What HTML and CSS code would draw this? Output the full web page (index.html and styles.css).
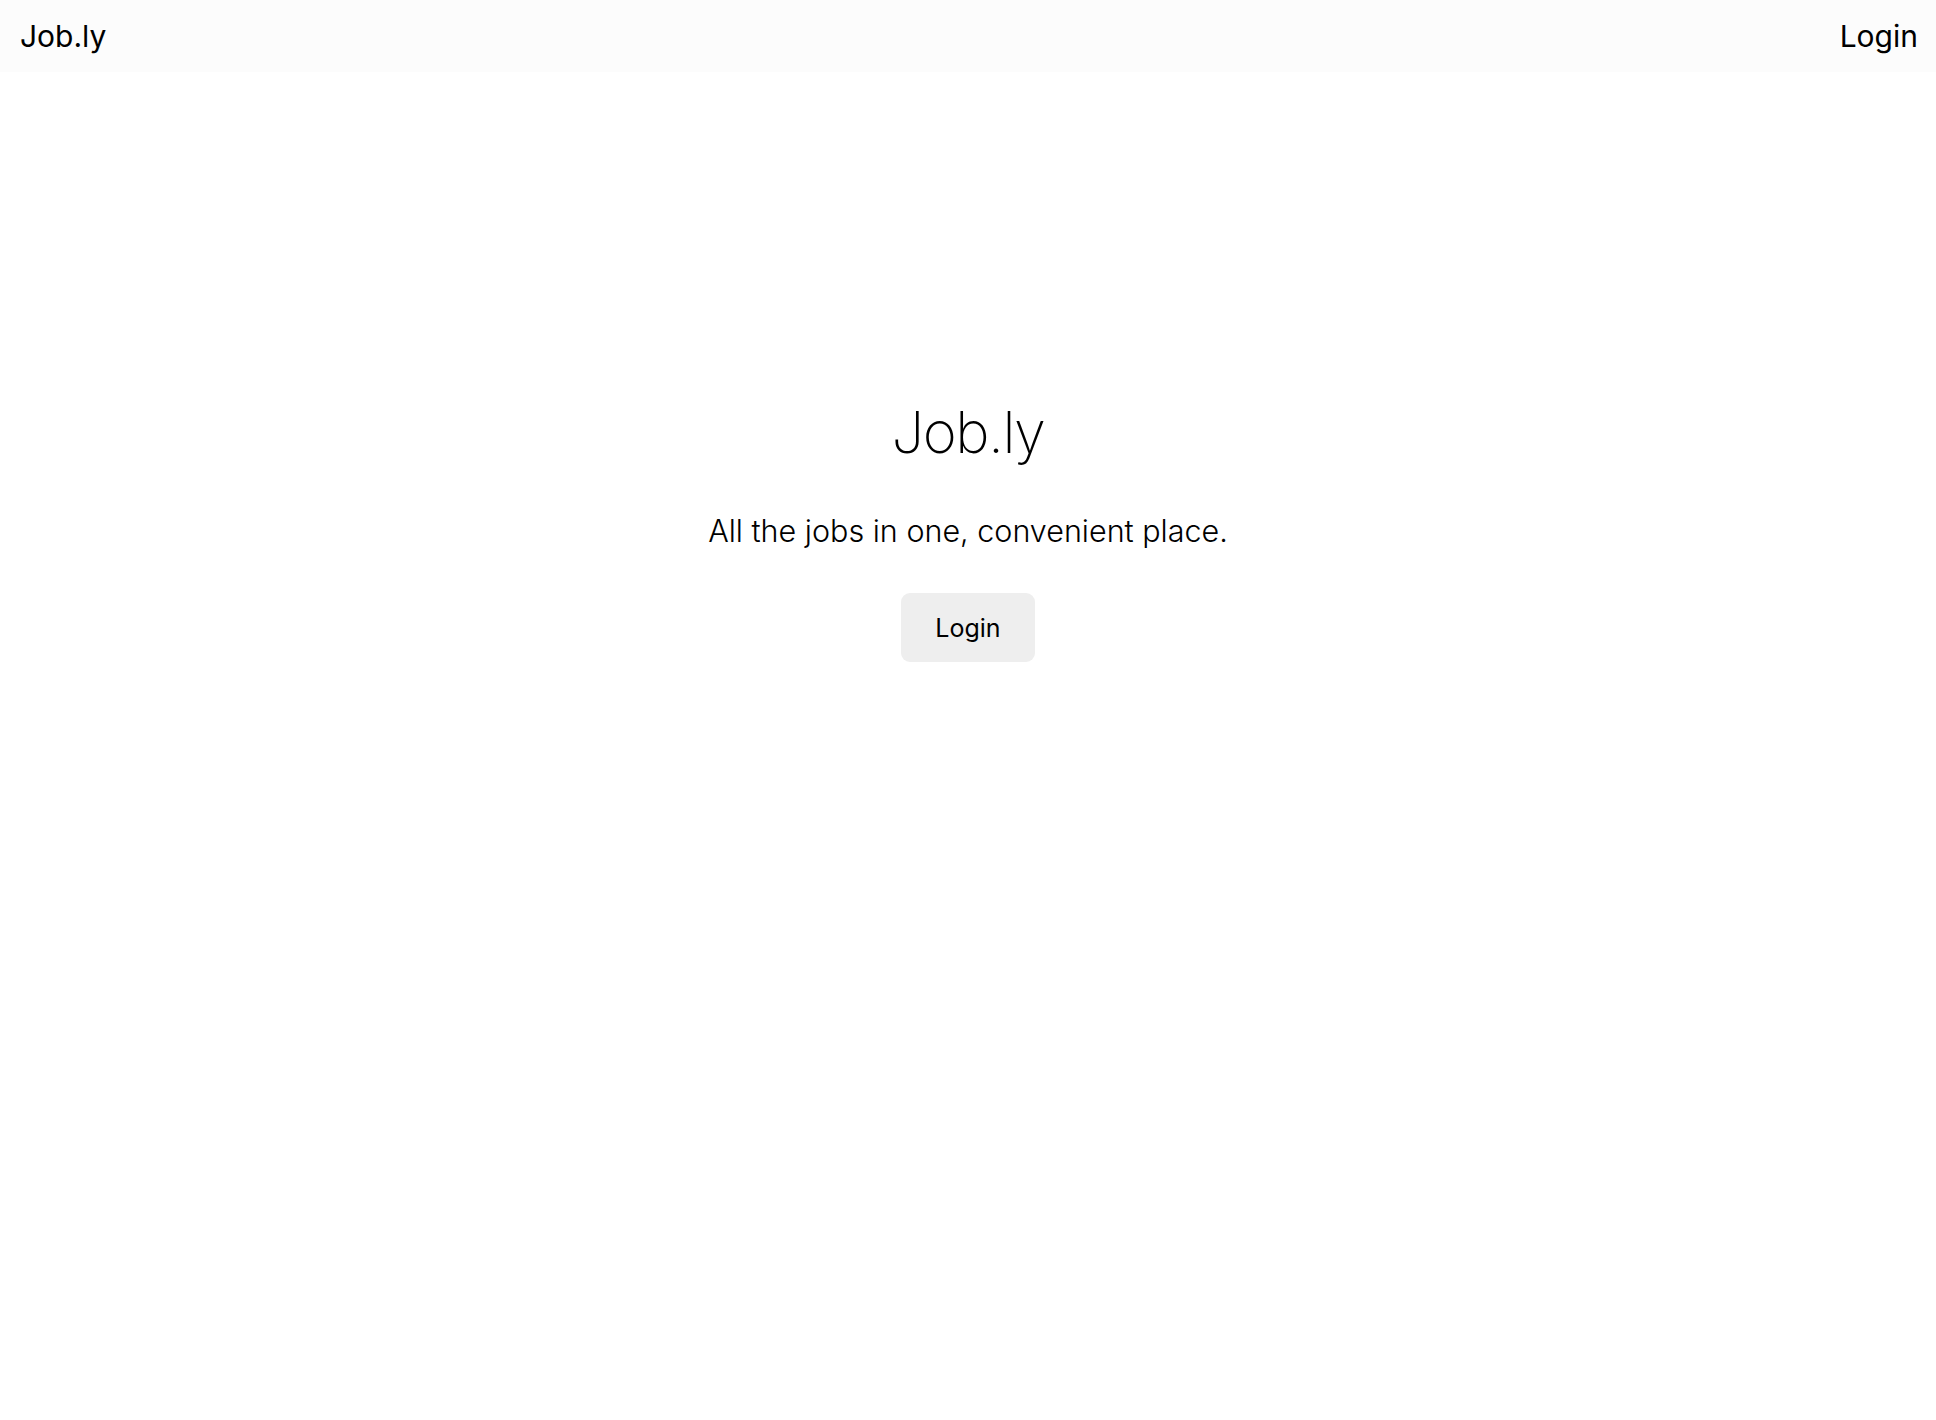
FILE: index.html
```html
<!DOCTYPE html>
<html lang="en">
<head>
<meta charset="utf-8">
<title>Job.ly</title>
<link rel="stylesheet" href="styles.css">
</head>
<body>
<nav class="navbar">
  <a class="brand" href="#">Job.ly</a>
  <a class="nav-link" href="#">Login</a>
</nav>
<main class="hero">
  <h1 class="hero-title">Job.ly</h1>
  <p class="hero-lead">All the jobs in one, convenient place.</p>
  <a class="btn" href="#">Login</a>
</main>
</body>
</html>
```
FILE: styles.css
```css
* { box-sizing: border-box; }
html, body { margin: 0; padding: 0; }
body {
  font-family: Inter, "Noto Sans", sans-serif;
  color: #000;
  background: #fff;
  min-height: 1420px;
}
a { text-decoration: none; color: #000; }
.navbar {
  height: 72px;
  background: #fcfcfc;
  display: flex;
  align-items: center;
  justify-content: space-between;
  padding: 0 18px 0 20px;
}
.brand, .nav-link {
  font-size: 30px;
  font-weight: 400;
  line-height: 1;
}
.hero {
  display: flex;
  flex-direction: column;
  align-items: center;
  padding-top: 324px;
}
.hero-title {
  margin: 0;
  font-size: 58px;
  font-weight: 200;
  letter-spacing: -1.5px;
  line-height: 72px;
}
.hero-lead {
  margin: 45px 0 0;
  font-size: 30.5px;
  font-weight: 300;
  line-height: 36px;
}
.btn {
  margin-top: 44px;
  width: 134px;
  height: 69px;
  border-radius: 9px;
  background: #eeeeee;
  display: flex;
  align-items: center;
  justify-content: center;
  font-size: 25px;
  font-weight: 400;
}
```
